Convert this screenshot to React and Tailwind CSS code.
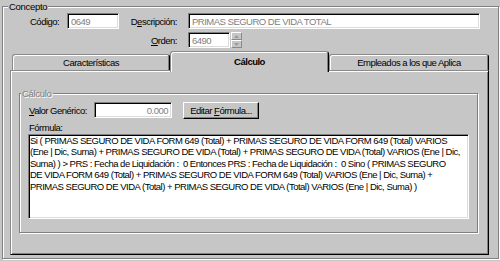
import React from 'react'

const formula = [
  'Si ( PRIMAS SEGURO DE VIDA FORM 649 (Total) + PRIMAS SEGURO DE VIDA FORM 649 (Total) VARIOS',
  '(Ene | Dic, Suma) + PRIMAS SEGURO DE VIDA (Total) + PRIMAS SEGURO DE VIDA (Total) VARIOS (Ene | Dic,',
  'Suma) ) > PRS : Fecha de Liquidación :  0 Entonces PRS : Fecha de Liquidación :  0 Sino ( PRIMAS SEGURO',
  'DE VIDA FORM 649 (Total) + PRIMAS SEGURO DE VIDA FORM 649 (Total) VARIOS (Ene | Dic, Suma) +',
  'PRIMAS SEGURO DE VIDA (Total) + PRIMAS SEGURO DE VIDA (Total) VARIOS (Ene | Dic, Suma) )',
]

const sunken =
  'border border-t-[#808080] border-l-[#808080] border-r-white border-b-white shadow-[inset_1px_1px_0_#000,inset_-1px_-1px_0_#dcdcdc]'
const raised =
  'border border-t-white border-l-white border-r-black border-b-black shadow-[inset_-1px_-1px_0_#808080]'

function Field({ className, children }) {
  return (
    <div className={`h-[16px] bg-white ${sunken} flex items-center text-[#808080] whitespace-nowrap overflow-hidden ${className}`}>
      <span>{children}</span>
    </div>
  )
}

function Arrow({ up }) {
  return (
    <svg width="5" height="3" viewBox="0 0 5 3">
      <path d={up ? 'M2.5 0L5 3H0Z' : 'M0 0H5L2.5 3Z'} fill="#9a9a9a" />
    </svg>
  )
}

function Tab({ active, width, children }) {
  const base =
    'flex items-center justify-center whitespace-nowrap rounded-t-[3px] border-t border-l border-r border-t-[#8a8a8a] border-l-[#8a8a8a] border-r-black shadow-[inset_1px_1px_0_#fff,inset_-1px_0_0_#808080]'
  return active ? (
    <div className={`relative z-10 -mb-[2px] h-[21px] pb-[1px] bg-[#c6c6c6] font-bold ${width} ${base}`}>
      <span>{children}</span>
    </div>
  ) : (
    <div className={`h-[16px] ${width} ${base}`}>
      <span>{children}</span>
    </div>
  )
}

export default function App() {
  return (
    <div className="w-[500px] h-[261px] overflow-hidden bg-[#c6c6c6] text-black text-[9.5px] tracking-[-0.5px] leading-[13px] font-['Liberation_Sans',Arial,sans-serif] pt-[6px]">
      {/* Concepto */}
      <div className="relative ml-[2px] w-[497px] h-[253px] border border-[#808080] shadow-[inset_1px_1px_0_#fff,1px_1px_0_#fff] pt-[6px]">
        <span className="absolute left-[5px] -top-[7px] px-[1px] bg-[#c6c6c6] tracking-[-0.3px]">Concepto</span>

        <div className="flex items-center h-[16px]">
          <span className="w-[64px] pl-[27px] whitespace-nowrap">Código:</span>
          <Field className="w-[52px] pl-[3px]">0649</Field>
          <span className="w-[69px] text-right pr-[11px] whitespace-nowrap">
            D<u>e</u>scripción:
          </span>
          <Field className="w-[292px] pl-[3px]">PRIMAS SEGURO DE VIDA TOTAL</Field>
        </div>

        <div className="flex items-center h-[16px] mt-[3px]">
          <span className="w-[185px] text-right pr-[11px]">
            <u>O</u>rden:
          </span>
          <Field className="w-[42px] pl-[3px]">6490</Field>
          <div className="ml-[1px] w-[11px] h-[16px] flex flex-col">
            <div className="h-[8px] flex items-center justify-center bg-[#c6c6c6] border border-t-white border-l-white border-r-[#8a8a8a] border-b-[#8a8a8a]">
              <Arrow up />
            </div>
            <div className="h-[8px] flex items-center justify-center bg-[#c6c6c6] border border-t-white border-l-white border-r-[#8a8a8a] border-b-[#8a8a8a]">
              <Arrow />
            </div>
          </div>
        </div>

        {/* Tabs */}
        <div className="mt-[3px] ml-[7px] w-[479px]">
          <div className="flex items-end h-[19px] pl-[2px]">
            <Tab width="w-[158px]">Características</Tab>
            <Tab active width="w-[159px]">Cálculo</Tab>
            <Tab width="w-[160px]">Empleados a los que Aplica</Tab>
          </div>
          <div className="h-[185px] border border-t-[#8a8a8a] border-l-[#8a8a8a] border-r-black border-b-black shadow-[inset_1px_1px_0_#fff,inset_-1px_-1px_0_#808080] pt-[22px]">
            {/* Cálculo group */}
            <div className="relative ml-[8px] w-[459px] h-[140px] border border-[#808080] shadow-[inset_1px_1px_0_#fff,1px_1px_0_#fff] pt-[8px]">
              <span className="absolute left-[1px] -top-[7px] px-[1px] bg-[#c6c6c6] text-[#808080] tracking-[-0.3px] [text-shadow:1px_1px_0_#fff]">
                Cálculo
              </span>

              <div className="flex items-start h-[17px]">
                <div className="w-[74px] pl-[9px] h-[16px] flex items-center whitespace-nowrap">
                  <span>
                    <u>V</u>alor Genérico:
                  </span>
                </div>
                <Field className="w-[78px] justify-end pr-[3px]">0.000</Field>
                <button className={`ml-[11px] w-[76px] h-[17px] flex items-center justify-center whitespace-nowrap ${raised}`}>
                  <span>
                    Editar <u>F</u>órmula...
                  </span>
                </button>
              </div>

              <div className="mt-[3px] ml-[9px] h-[12px] leading-[12px]">Fórmula:</div>

              <div className={`ml-[8px] w-[441px] h-[85px] bg-white ${sunken} pl-[1px] overflow-hidden leading-[11.4px]`}>
                {formula.map((line, i) => (
                  <div key={i} className="whitespace-pre">{line}</div>
                ))}
              </div>
            </div>
          </div>
        </div>
      </div>
    </div>
  )
}
